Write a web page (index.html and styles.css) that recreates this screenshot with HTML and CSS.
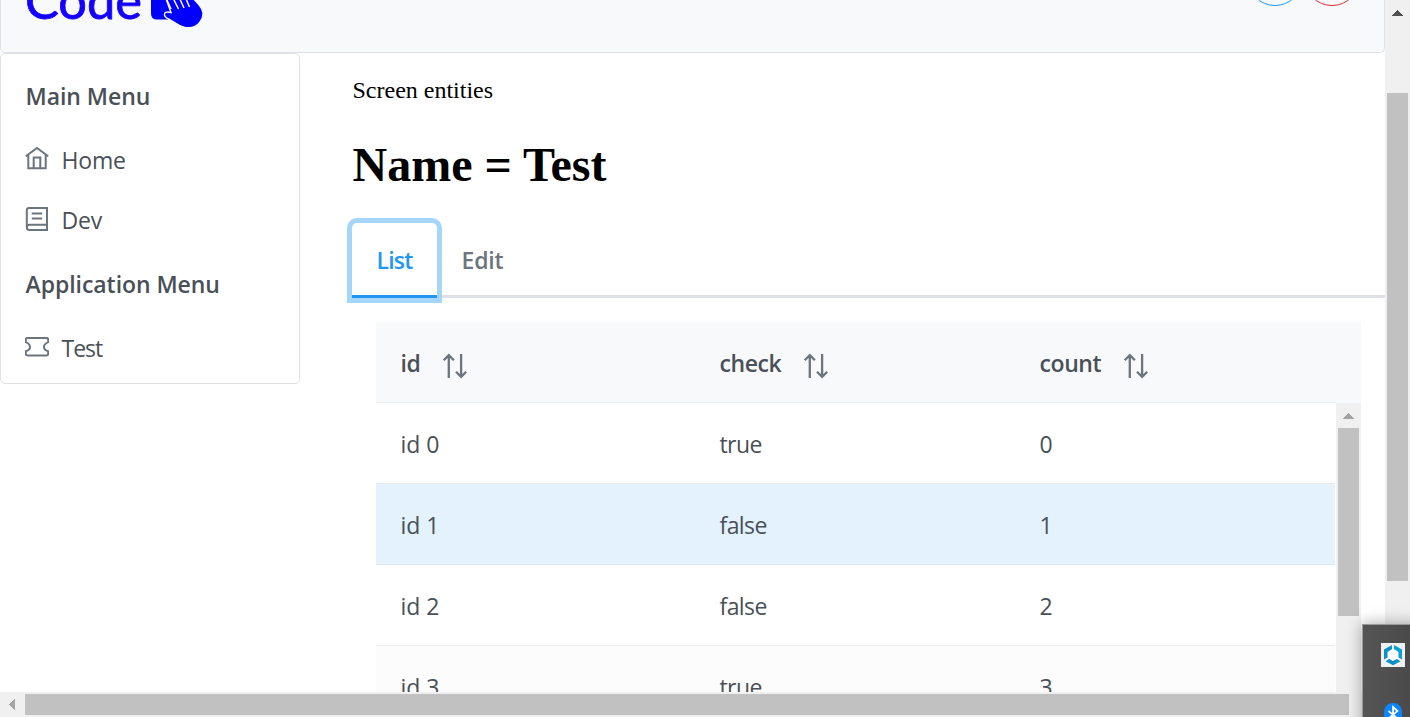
FILE: index.html
```html
<!DOCTYPE html>
<html lang="en">
<head>
<meta charset="utf-8">
<title>Screen entities</title>
<link rel="stylesheet" href="styles.css">
</head>
<body>
<div class="window">
  <div class="viewport">
    <div class="page">
      <header class="topbar">
        <svg class="logo" width="180" height="52" viewBox="0 0 180 52">
          <text class="logo-text" x="0" y="18.500" textLength="117" lengthAdjust="spacingAndGlyphs">Code</text>
          <path d="M126-12h34v31.500h-28q-6 0-6-6z" fill="#00f"/>
          <path d="M137-12 146 12.500q-6-1.500-6.500 1.500-.5 3 4 5l7 4q7 4.800 13.500 4.800 6.500 0 10.500-5 4-4.500 3.500-10-.5-4-4-8l-9-10-5-8z" fill="#00f" stroke="#f8f9fa" stroke-width="1.400"/>
          <path d="M141-2 146 9M147-4l6.500 13M153-5l6 13M159-6l5.500 13" fill="none" stroke="#f8f9fa" stroke-width="1.500"/>
        </svg>
        <div class="actions">
          <span class="round round-info"></span>
          <span class="round round-danger"></span>
        </div>
      </header>
      <div class="content">
        <nav class="menu">
          <div class="menu-title">Main Menu</div>
          <a class="menu-item">
            <svg class="icon" width="24" height="24" viewBox="0 0 24 24"><path d="M.8 9.300 12 1l11.200 8.300M3.300 8v13.200h17.400V8M8.700 21V10.400h6.600V21"/></svg>
            <span>Home</span>
          </a>
          <a class="menu-item">
            <svg class="icon" width="24" height="24" viewBox="0 0 24 24"><path d="M22 .9H4.200Q1.800.900 1.800 3.300v17q0 2.700 2.700 2.700H22zM1.800 20.400q0-2.600 2.700-2.600H22M6.800 6.400h10.400M6.800 11.500h10.400"/></svg>
            <span>Dev</span>
          </a>
          <div class="menu-title title-app">Application Menu</div>
          <a class="menu-item">
            <svg class="icon" width="24" height="24" viewBox="0 0 24 24"><path d="M2.500 3h19q1.700 0 1.700 1.700v2.500Q19 9 19 12t4.200 4.300v2.500q0 1.700-1.700 1.700h-19Q.8 20.500.8 18.800v-2.500Q5 15 5 12T.8 7.200V4.700Q.8 3 2.500 3z"/></svg>
            <span class="tight">Test</span>
          </a>
        </nav>
        <main class="main">
          <div class="crumb">Screen entities</div>
          <h1 class="heading">Name = Test</h1>
          <div class="tabs">
            <div class="tab tab-active">List</div>
            <div class="tab">Edit</div>
          </div>
          <div class="table">
            <div class="row head">
              <div class="cell">id <svg class="sort" width="26" height="26" viewBox="0 0 26 26"><path d="M6.800 25V2.500M1.700 7.200l5.100-5 5.100 5M19.100 1v22.500M14 18.800l5.100 5 5.100-5"/></svg></div>
              <div class="cell">check <svg class="sort" width="26" height="26" viewBox="0 0 26 26"><path d="M6.800 25V2.500M1.700 7.200l5.100-5 5.100 5M19.100 1v22.500M14 18.800l5.100 5 5.100-5"/></svg></div>
              <div class="cell">count <svg class="sort" width="26" height="26" viewBox="0 0 26 26"><path d="M6.800 25V2.500M1.700 7.200l5.100-5 5.100 5M19.100 1v22.500M14 18.800l5.100 5 5.100-5"/></svg></div>
            </div>
            <div class="table-body">
              <div class="rows">
                <div class="row"><div class="cell">id 0</div><div class="cell tight">true</div><div class="cell">0</div></div>
                <div class="row row-selected"><div class="cell">id 1</div><div class="cell tight">false</div><div class="cell">1</div></div>
                <div class="row"><div class="cell">id 2</div><div class="cell tight">false</div><div class="cell">2</div></div>
                <div class="row row-odd"><div class="cell">id 3</div><div class="cell tight">true</div><div class="cell">3</div></div>
              </div>
              <div class="vscroll vscroll-table">
                <svg class="arrow" width="25" height="25" viewBox="0 0 25 25" shape-rendering="crispEdges"><path d="M7 16 12.500 10 18 16z" fill="#a3a3a3"/></svg>
                <div class="thumb"></div>
              </div>
            </div>
          </div>
        </main>
      </div>
    </div>
    <div class="vscroll vscroll-page">
      <svg class="arrow" width="25" height="25" viewBox="0 0 25 25" shape-rendering="crispEdges"><path d="M7 16 12.500 10 18 16z" fill="#505050"/></svg>
      <div class="thumb"></div>
    </div>
  </div>
  <div class="hscroll">
    <svg class="arrow" width="25" height="25" viewBox="0 0 25 25" shape-rendering="crispEdges"><path d="M15 7 9 12.500 15 18z" fill="#a3a3a3"/></svg>
    <div class="hthumb"></div>
  </div>
  <aside class="tray">
    <svg class="tray-icon" width="24" height="24" viewBox="0 0 24 24">
      <path d="M0 0h24v24H0z" fill="#f0f0f0"/>
      <path d="M12 6 17.500 9v6.500L12 18l-5.500-2.500V9z" fill="#fff"/>
      <path d="M11 2v4L6.500 9v5.500L3 16.500v-10z" fill="#0a8fc7"/>
      <path d="M13 2v4l4.500 3v5.500l3.500 2v-10z" fill="#08a0d8"/>
      <path d="m4.500 18.300 3.700-2.300 3.800 2 3.800-2 3.700 2.300L12 22.300z" fill="#0a8fc7"/>
    </svg>
    <svg class="tray-icon" width="24" height="28" viewBox="0 0 24 28">
      <rect x="3" width="18" height="27" rx="8.500" fill="#0a84ff"/>
      <path d="m7.500 8 9 7.500-4.500 4V4L16.500 8l-9 7.500" fill="none" stroke="#fff" stroke-width="1.700"/>
    </svg>
  </aside>
</div>
</body>
</html>
```

FILE: styles.css
```css
* { box-sizing: border-box; }
body {
  margin: 0;
  background: #fff;
  font-family: "Open Sans", "Noto Sans", sans-serif;
  font-size: 23px;
  color: #495057;
}
.window {
  position: relative;
  display: flex;
  flex-direction: column;
  width: 1410px;
  height: 717px;
  overflow: hidden;
}
.viewport { display: flex; height: 692px; }
.page { width: 1385px; height: 692px; overflow: hidden; }
.topbar {
  display: flex;
  justify-content: space-between;
  height: 53px;
  padding: 0 24px;
  background: #f8f9fa;
  border: 1px solid #dee2e6;
  border-top: 0;
  border-radius: 0 0 5px 5px;
  overflow: hidden;
}
.logo-text {
  font-family: Lato, sans-serif;
  font-size: 51px;
  fill: #1400ff;
  stroke: #1400ff;
  stroke-width: .8px;
}
.actions { display: flex; gap: 1px; margin-top: -50px; }
.round { width: 56px; height: 56px; border: 1px solid; border-radius: 50%; }
.round-info { border-color: #2196f3; }
.round-danger { border-color: #d32f2f; }
.content { display: flex; align-items: flex-start; }
.menu {
  flex: none;
  width: 300px;
  height: 331px;
  padding: 12px 0 0 24.5px;
  border: 1px solid #dee2e6;
  border-radius: 5px;
}
.menu-title { height: 64px; line-height: 61px; font-weight: 600; letter-spacing: -.05px; }
.title-app { height: 68px; line-height: 68px; }
.menu-item { display: flex; align-items: center; gap: 12px; height: 60px; line-height: 60px; letter-spacing: -.2px; }
.icon { flex: none; margin: -3px .5px 0 -.5px; fill: none; stroke: #6c757d; stroke-width: 2; }
.tight { letter-spacing: -.6px; }
.menu-item .tight { letter-spacing: -1px; }
.main { flex: none; width: 1033px; margin-left: 52px; }
.crumb {
  height: 76px;
  padding: 24px 0 0 .5px;
  font: 24px/27px "Liberation Serif", serif;
  color: #000;
}
.heading {
  height: 94px;
  margin: 0;
  padding: 8px 0 0 .5px;
  font: bold 48px/55px "Liberation Serif", serif;
  color: #000;
}
.tabs { display: flex; height: 75px; border-bottom: 3px solid #dee2e6; }
.tab { height: 75px; padding: 0 24.5px; line-height: 74px; font-weight: 600; letter-spacing: -.2px; color: #6c757d; }
.tab-active {
  width: 85px;
  border-bottom: 3px solid #2196f3;
  border-radius: 5px 5px 0 0;
  box-shadow: 0 0 0 5px #a6d5fa;
  background: #fff;
  color: #2196f3;
  letter-spacing: -.8px;
}
.table { width: 985px; margin: 24px 0 0 24px; }
.row {
  display: grid;
  grid-template-columns: 319px 320px 320px;
  width: 959px;
  height: 81px;
  border-bottom: 1px solid #e9ecef;
  background: #fff;
}
.head { font-weight: 600; letter-spacing: -.4px; background: #f8f9fa; box-shadow: 26px 0 #f8f9fa; }
.cell { display: flex; align-items: center; gap: 21.5px; padding: 2px 0 0 24.5px; }
.sort { margin-top: 5px; fill: none; stroke: #6c757d; stroke-width: 2.300; }
.row-selected { background: #e3f2fd; border-color: #e0e9f0; }
.row-odd { background: #fcfcfc; }
.table-body { display: flex; justify-content: space-between; height: 289px; overflow: hidden; }
.rows { height: 289px; overflow: hidden; }
.vscroll { width: 25px; background: #f0f0f0; }
.vscroll .arrow { display: block; }
.thumb { width: 21px; margin-left: 2px; background: #c1c1c1; }
.vscroll-table .thumb { height: 188px; }
.vscroll-page .thumb { height: 488px; margin-top: 68px; }
.hscroll { display: flex; align-items: center; width: 1410px; height: 25px; background: #f0f0f0; }
.hthumb { width: 1324px; height: 21px; background: #c1c1c1; }
.tray {
  position: absolute;
  left: 1362px;
  top: 624px;
  display: flex;
  flex-direction: column;
  gap: 36px;
  width: 60px;
  height: 110px;
  padding: 18px 0 0 18px;
  border: 1px solid #9a9a9a;
  background: linear-gradient(90deg, #555, #484848);
  box-shadow: 0 0 15px rgba(0, 0, 0, .35);
}
.tray-icon { flex: none; }
```
